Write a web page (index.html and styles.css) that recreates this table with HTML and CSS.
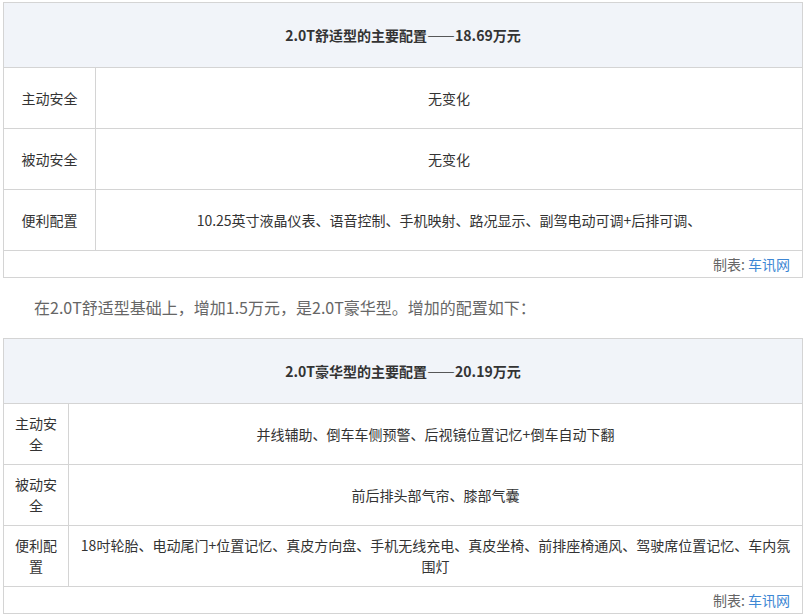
FILE: index.html
```html
<!DOCTYPE html>
<html lang="zh">
<head>
<meta charset="utf-8">
<link rel="stylesheet" href="styles.css">
</head>
<body>
<div class="page">
  <table class="cfg cfg-a">
    <colgroup><col class="c-label"><col></colgroup>
    <tr><th colspan="2" class="head">2.0T舒适型的主要配置——18.69万元</th></tr>
    <tr><td class="label">主动安全</td><td class="val">无变化</td></tr>
    <tr><td class="label">被动安全</td><td class="val">无变化</td></tr>
    <tr><td class="label">便利配置</td><td class="val">10.25英寸液晶仪表、语音控制、手机映射、路况显示、副驾电动可调+后排可调、</td></tr>
    <tr><td colspan="2" class="foot">制表: <span class="src">车讯网</span></td></tr>
  </table>
  <p class="note">在2.0T舒适型基础上，增加1.5万元，是2.0T豪华型。增加的配置如下：</p>
  <table class="cfg cfg-b">
    <colgroup><col class="c-label"><col></colgroup>
    <tr><th colspan="2" class="head">2.0T豪华型的主要配置——20.19万元</th></tr>
    <tr><td class="label">主动安全</td><td class="val">并线辅助、倒车车侧预警、后视镜位置记忆+倒车自动下翻</td></tr>
    <tr><td class="label">被动安全</td><td class="val">前后排头部气帘、膝部气囊</td></tr>
    <tr><td class="label">便利配置</td><td class="val">18吋轮胎、电动尾门+位置记忆、真皮方向盘、手机无线充电、真皮坐椅、前排座椅通风、驾驶席位置记忆、车内氛围灯</td></tr>
    <tr><td colspan="2" class="foot">制表: <span class="src">车讯网</span></td></tr>
  </table>
</div>
</body>
</html>
```
FILE: styles.css
```css
html, body {
  margin: 0;
  padding: 0;
  background: #fff;
}
body {
  font-family: "Noto Sans CJK SC", "Noto Sans", sans-serif;
  color: #333;
}
.page {
  padding: 2px 0 0 3px;
  width: 800px;
}
.cfg {
  border-collapse: collapse;
  width: 800px;
  table-layout: fixed;
}
.cfg th, .cfg td {
  border: 1px solid #d4d4d4;
  text-align: center;
  vertical-align: middle;
  font-size: 14px;
  line-height: 21px;
  padding: 0 8px;
}
.head {
  background: #f1f4f9;
  font-weight: bold;
  height: 64px;
}
.cfg td {
  height: 60px;
}
.cfg-a .c-label { width: 92px; }
.cfg-b .c-label { width: 65px; }
.cfg td.foot {
  height: 26px;
  text-align: right;
  padding: 0 12px 0 0;
  color: #666;
}
.src { color: #3e87d4; }
.note {
  margin: 14px 0 16px;
  padding-left: 31px;
  font-size: 16px;
  line-height: 30px;
  color: #666;
}
```
